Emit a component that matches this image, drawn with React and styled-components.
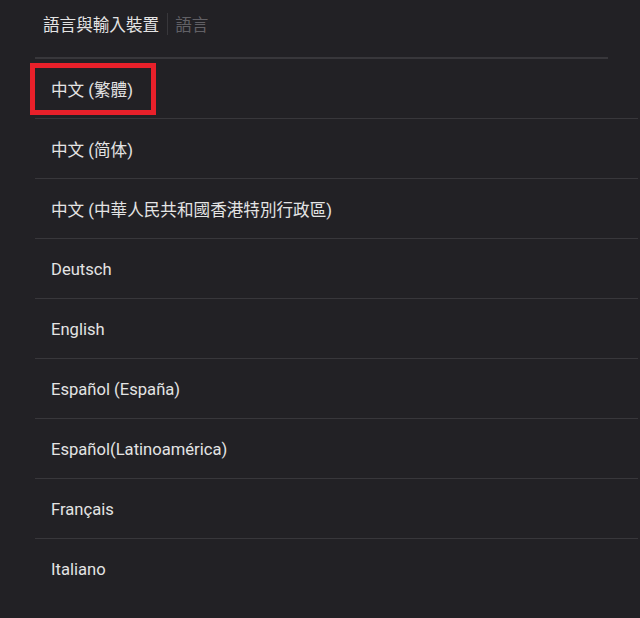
import React from 'react';
import styled, { createGlobalStyle } from 'styled-components';

const Global = createGlobalStyle`
  html, body {
    margin: 0;
    padding: 0;
    background: #222125;
    height: 100%;
  }
  body {
    font-family: Roboto, "Noto Sans CJK TC", "Noto Sans", sans-serif;
  }
`;

const Screen = styled.div`
  width: 640px;
  height: 618px;
  overflow: hidden;
  background: #222125;
  padding-left: 35px;
  box-sizing: border-box;
`;

const Header = styled.div`
  height: 59px;
  box-sizing: border-box;
  padding: 13px 0 0 8px;
  display: flex;
  align-items: flex-start;
  border-bottom: 2px solid #38373b;
  width: 573px;
  font-family: "Noto Sans CJK TC", sans-serif;
  font-size: 16.6px;
  line-height: 22px;
`;

const Crumb = styled.span`
  color: ${p => (p.dim ? '#616065' : '#e4e4e4')};
`;

const Sep = styled.span`
  width: 1px;
  height: 22px;
  background: #38373b;
  margin: 0 7px 0 8px;
`;

const List = styled.div`
  width: 603px;
`;

const Row = styled.div`
  position: relative;
  height: 60px;
  box-sizing: border-box;
  display: flex;
  align-items: center;
  padding: 1px 0 0 16px;
  border-bottom: 1px solid #38373b;
  color: #e4e4e4;
  font-size: 16.6px;
  &:last-child {
    border-bottom: none;
  }
`;

const Highlight = styled.div`
  position: absolute;
  left: -5px;
  top: 4px;
  width: 126px;
  height: 52px;
  box-sizing: border-box;
  border: 5px solid #e8202a;
  pointer-events: none;
`;

const languages = [
  '中文 (繁體)',
  '中文 (简体)',
  '中文 (中華人民共和國香港特別行政區)',
  'Deutsch',
  'English',
  'Español (España)',
  'Español(Latinoamérica)',
  'Français',
  'Italiano',
];

export default function App() {
  return (
    <Screen>
      <Global />
      <Header>
        <Crumb>語言與輸入裝置</Crumb>
        <Sep />
        <Crumb dim>語言</Crumb>
      </Header>
      <List>
        {languages.map((name, i) => (
          <Row key={name}>
            {name}
            {i === 0 && <Highlight />}
          </Row>
        ))}
      </List>
    </Screen>
  );
}
